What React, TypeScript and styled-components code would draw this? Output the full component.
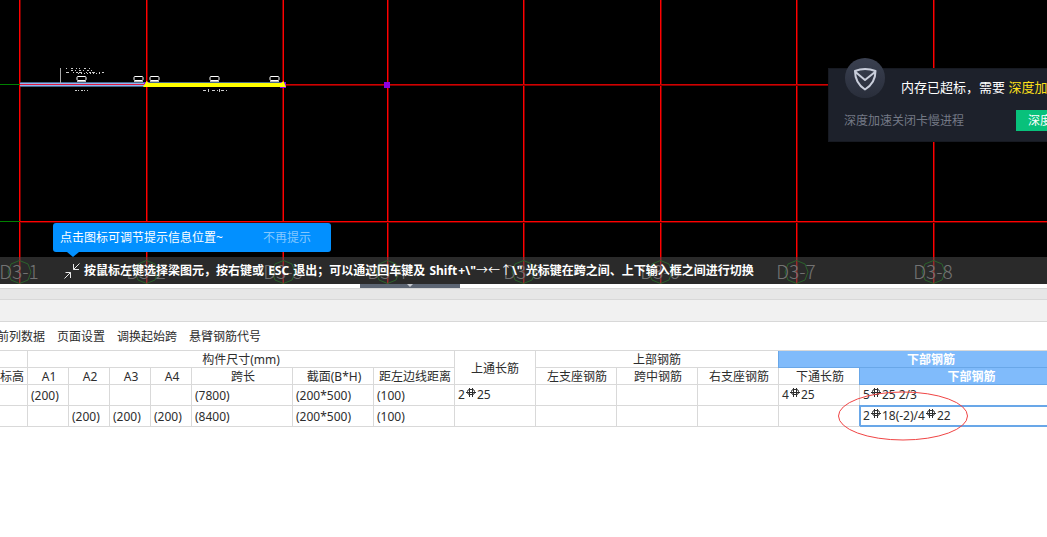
import React from "react";
import styled, { createGlobalStyle } from "styled-components";

const GlobalStyle = createGlobalStyle`
  * { box-sizing: border-box; }
  body {
    margin: 0;
    background: #fff;
    color: #2d2d2d;
    font: 12px/16px "Noto Sans", "Noto Sans CJK SC", sans-serif;
    overflow-x: hidden;
  }
`;

const Page = styled.main`
  display: flex;
  flex-direction: column;
  min-height: 100vh;
  overflow: hidden;
`;

const Viewport = styled.section`
  position: relative;
  display: flex;
  flex-direction: column;
  justify-content: flex-end;
  height: 284px;
  background: #000;
  overflow: hidden;
`;

const Drawing = styled.svg`
  position: absolute;
  inset: 0;
  width: 100%;
  height: 100%;
`;

const HintBar = styled.div`
  position: relative;
  display: flex;
  align-items: center;
  gap: 4px;
  height: 27px;
  padding-left: 64px;
  background: rgba(75, 75, 75, 0.56);
  color: #fff;
  font-weight: 700;
  white-space: nowrap;
`;

const Key = styled.kbd`
  margin: 0 1px;
  font: inherit;
`;

const Arrows = styled.span`
  font-weight: 400;
`;

const Bubble = styled.div`
  position: absolute;
  left: 53px;
  bottom: 32px;
  display: flex;
  align-items: center;
  justify-content: space-between;
  width: 278px;
  height: 29px;
  padding: 0 20px 0 7px;
  border-radius: 3px;
  background: #0290ff;
  color: #fff;
  white-space: nowrap;

  &::after {
    content: "";
    position: absolute;
    top: 100%;
    left: 14px;
    border: 6px solid transparent;
    border-top: 5px solid #0290ff;
    border-bottom: 0;
  }
`;

const BubbleButton = styled.button`
  padding: 0;
  border: 0;
  background: none;
  color: #84c8ff;
  font: inherit;
`;

const Alert = styled.aside`
  position: absolute;
  top: 68px;
  left: 828px;
  display: flex;
  flex-direction: column;
  gap: 14px;
  width: 300px;
  height: 74px;
  padding: 9px 0 0 15px;
  border: 1px solid #171a22;
  background: #1d212b;
  white-space: nowrap;
`;

const AlertTitle = styled.p`
  margin: 0 0 0 57px;
  color: #fff;
  font-size: 13px;
  line-height: 18px;
`;

const AlertMark = styled.span`
  color: #ffe01a;
`;

const AlertRow = styled.div`
  display: flex;
  align-items: center;
  justify-content: space-between;
  width: 244px;
  color: #747986;
`;

const AlertButton = styled.button`
  height: 21px;
  padding: 0 12px;
  border: 0;
  background: #08c17b;
  color: #fff;
  font: inherit;
`;

const Badge = styled.svg`
  position: absolute;
  top: -13px;
  left: 14px;
  width: 44px;
  height: 44px;
`;

const Splitter = styled.div`
  display: flex;
  height: 5px;
  padding-left: 360px;
  border-bottom: 1px solid #d5d5d5;
`;

const SplitterGrip = styled.button`
  display: flex;
  justify-content: center;
  width: 100px;
  height: 4px;
  padding: 0;
  border: 0;
  background: #5c6573;

  &::after {
    content: "";
    border: 3px solid transparent;
    border-top-color: #c5c9cf;
    border-bottom: 0;
  }
`;

const Strip = styled.div<{ $height: number; $color: string }>`
  height: ${(p) => p.$height}px;
  border-bottom: 1px solid #d8d8d8;
  background: ${(p) => p.$color};
`;

const Toolbar = styled.nav`
  display: flex;
  align-items: center;
  gap: 12px;
  height: 28px;
  margin-left: -3px;
  padding-top: 1px;
`;

const ToolButton = styled.button`
  padding: 0;
  border: 0;
  background: none;
  color: inherit;
  font: inherit;
  white-space: nowrap;
`;

const TableWrap = styled.div`
  overflow: hidden;
`;

const Table = styled.table`
  width: 100%;
  min-width: 1084px;
  table-layout: fixed;
  border-collapse: separate;
  border-spacing: 0;
  border-top: 1px solid #d9d9d9;
`;

const Head = styled.th<{ $active?: boolean; $sub?: boolean; $end?: boolean }>`
  position: ${(p) => (p.$active ? "relative" : "static")};
  padding: 2px ${(p) => (p.$end ? 4 : 0)}px 0 ${(p) => (p.$sub ? 2 : 0)}px;
  border: solid ${(p) => (p.$active ? "#69a7e8" : "#d9d9d9")};
  border-width: 0 1px 1px 0;
  background: ${(p) => (p.$active ? "#80bbfb" : "#fff")};
  box-shadow: ${(p) => (p.$active ? "-1px 0 0 #69a7e8" : "none")};
  color: ${(p) => (p.$active ? "#fff" : "inherit")};
  font-weight: ${(p) => (p.$active ? 700 : 400)};
  line-height: 14px;
  text-align: ${(p) => (p.$end ? "right" : "center")};
  white-space: nowrap;
`;

const Cell = styled.td<{ $selected?: boolean; $bar?: boolean }>`
  position: ${(p) => (p.$selected ? "relative" : "static")};
  height: 21px;
  padding: ${(p) => (p.$bar ? 0 : 2)}px 0 0 3px;
  border: solid ${(p) => (p.$selected ? "#69a7e8" : "#d9d9d9")};
  border-width: 0 1px 1px 0;
  box-shadow: ${(p) =>
    p.$selected
      ? "-1px -1px 0 #69a7e8, inset 1px 1px 0 #69a7e8, inset 0 -1px 0 #69a7e8"
      : "none"};
  line-height: 18px;
  white-space: nowrap;
`;

const BarGlyph = styled.svg`
  width: 10px;
  height: 10px;
  margin: 0 1px;
  vertical-align: 1px;
`;

const Annotation = styled.svg`
  position: absolute;
  left: 837px;
  top: 389px;
  width: 132px;
  height: 52px;
  pointer-events: none;
`;

const axes = [19, 146, 283, 387, 523, 660, 796, 933];
const tags = [81, 138, 154, 214, 274];
const columns = [28, 41, 41, 41, 41, 101, 81, 81, 81, 81, 81, 81, 81];
const subHeads = ["A1", "A2", "A3", "A4", "跨长", "截面(B*H)", "距左边线距离", "左支座钢筋", "跨中钢筋", "右支座钢筋", "下通长筋"];
const rows = [
  ["", "(200)", "", "", "", "(7800)", "(200*500)", "(100)", "2#25", "", "", "", "4#25", "5#25 2/3"],
  ["", "", "(200)", "(200)", "(200)", "(8400)", "(200*500)", "(100)", "", "", "", "", "", "2#18(-2)/4#22"],
];

/* Each "#" stands for the grade mark of a reinforcing bar. */
function BarText({ value }: { value: string }) {
  return (
    <>
      {value.split("#").map((part, i) => (
        <React.Fragment key={i}>
          {i > 0 && (
            <BarGlyph viewBox="0 0 10 10" fill="none" stroke="#2d2d2d" aria-label="HRB400">
              <rect x="1.5" y="1.5" width="7" height="5" rx="2" />
              <path d="M3.5 0V9M6.5 0V9M0 4.5H10" />
            </BarGlyph>
          )}
          {part}
        </React.Fragment>
      ))}
    </>
  );
}

function PlanDrawing() {
  return (
    <Drawing aria-hidden="true">
      {axes.map((x) => (
        <g key={x}>
          <path d={`M${x === 283 ? x - 0.5 : x + 1.5} 0V284`} stroke="#700" />
          <path d={`M${x + 0.5} 0V284`} stroke="#f00" />
        </g>
      ))}
      <path d="M0 84.5H20M0 221.5H20" stroke="#008000" />
      <path d="M20 222.5H4000" stroke="#600" />
      <path d="M20 221.5H4000" stroke="#f00" />
      <path d="M20 84.5H4000" stroke="#d00000" />
      <path d="M20 85.5H4000" stroke="#800000" />
      <rect x="20" y="82" width="264" height="5" fill="#45688c" />
      <rect x="20" y="83" width="126" height="3" fill="#94b4f0" />
      <rect x="20" y="84" width="126" height="1" fill="#e0183c" />
      <rect x="144" y="82" width="5" height="5" fill="#8000ff" />
      <rect x="280" y="82" width="6" height="6" fill="#8000ff" />
      <rect x="384" y="82" width="6" height="6" fill="#8c00e0" />
      <path d="M143 87L146.500 81L149 83H281L283.500 81L286 87H149Z" fill="#ff0" />
      <path d="M60.5 68V83" stroke="#aaa" />
      {tags.map((x) => (
        <g key={x}>
          <rect x={x - 4} y="76.5" width="9" height="4" rx="1" fill="#000" stroke="#fff" />
          <path d={`M${x - 4} 81.5H${x + 5}`} stroke="#bbb" />
        </g>
      ))}
      <g stroke="#ccc">
        <path d="M66 68.5H91" strokeDasharray="1 4 2 3 1 2" />
        <path d="M71 70.5H92" strokeDasharray="2 2 1 3" />
        <path d="M66 72.5H104" strokeDasharray="3 4 1 2 2 1" />
        <path d="M78 73.5H100" strokeDasharray="1 2" />
        <path d="M75 90.5H88" strokeDasharray="2 1 1 2" />
        <path d="M203 90.5H227" strokeDasharray="3 2 1 3" />
        <path d="M208.5 89V92M219.5 89V92" />
      </g>
      {axes.map((x, i) => (
        <g key={x}>
          <path
            d={`M${x + 0.5} 260.5L${x + 9} 264L${x + 12} 272L${x + 9} 280L${x + 0.5} 283.5L${x - 8} 280L${x - 11} 272L${x - 8} 264Z`}
            fill="none"
            stroke="#008000"
          />
          <text
            x={x}
            y="279"
            textAnchor="middle"
            fill="#a4a4a4"
            fontFamily="'Noto Sans CJK SC', sans-serif"
            fontWeight="300"
            fontSize="19"
          >
            {`D3-${i + 1}`}
          </text>
        </g>
      ))}
    </Drawing>
  );
}

export default function App() {
  return (
    <Page>
      <GlobalStyle />
      <Viewport>
        <PlanDrawing />
        <Bubble>
          <span>点击图标可调节提示信息位置~</span>
          <BubbleButton>不再提示</BubbleButton>
        </Bubble>
        <HintBar>
          <svg width="16" height="16" viewBox="0 0 16 16" fill="none" stroke="#e8e8e8">
            <path d="M15.5 0.5L9.5 6.5M9.5 1V6.5H15M0.5 15.5L6.5 9.5M1.5 9.5H6.5V15" />
          </svg>
          <span>
            按鼠标左键选择梁图元，按右键或 <Key>ESC</Key> 退出；可以通过回车键及 <Key>Shift</Key>+\"<Arrows>→←↑</Arrows>\" 光标键在跨之间、上下输入框之间进行切换
          </span>
        </HintBar>
        <Alert>
          <Badge viewBox="0 0 44 44" aria-hidden="true">
            <defs>
              <linearGradient id="badge" x1="0" y1="0" x2="0" y2="1">
                <stop offset="0" stopColor="#3a4050" />
                <stop offset="1" stopColor="#292e3b" />
              </linearGradient>
            </defs>
            <circle cx="22" cy="22" r="20" fill="url(#badge)" />
            <path
              d="M12 15Q22 11 32.5 15Q32.5 27 22 33.500Q12 27 12 15ZM12.5 16L22 24L32 16"
              fill="none"
              stroke="#c9cedb"
              strokeWidth="2"
              strokeLinejoin="round"
            />
          </Badge>
          <AlertTitle>
            内存已超标，需要 <AlertMark>深度加速</AlertMark>
          </AlertTitle>
          <AlertRow>
            <span>深度加速关闭卡慢进程</span>
            <AlertButton>深度加速</AlertButton>
          </AlertRow>
        </Alert>
      </Viewport>
      <Splitter>
        <SplitterGrip aria-label="折叠" />
      </Splitter>
      <Strip $height={11} $color="#e7e7e7" />
      <Strip $height={22} $color="#f1f1f1" />
      <Toolbar>
        <ToolButton>前列数据</ToolButton>
        <ToolButton>页面设置</ToolButton>
        <ToolButton>调换起始跨</ToolButton>
        <ToolButton>悬臂钢筋代号</ToolButton>
      </Toolbar>
      <TableWrap>
        <Table>
          <colgroup>
            {columns.map((w, i) => (
              <col key={i} width={w} />
            ))}
            <col />
          </colgroup>
          <thead>
            <tr>
              <Head />
              <Head colSpan={7}>构件尺寸(mm)</Head>
              <Head rowSpan={2}>上通长筋</Head>
              <Head colSpan={3}>上部钢筋</Head>
              <Head colSpan={2} $active>下部钢筋</Head>
            </tr>
            <tr>
              <Head $end>标高</Head>
              {subHeads.map((t) => (
                <Head key={t} $sub>{t}</Head>
              ))}
              <Head $active>下部钢筋</Head>
            </tr>
          </thead>
          <tbody>
            {rows.map((row, r) => (
              <tr key={r}>
                {row.map((value, c) => (
                  <Cell key={c} $selected={r === 1 && c === 13} $bar={value.includes("#")}>
                    <BarText value={value} />
                  </Cell>
                ))}
              </tr>
            ))}
          </tbody>
        </Table>
      </TableWrap>
      <Annotation viewBox="0 0 132 52" fill="none" stroke="#f04444" aria-hidden="true">
        <ellipse cx="66" cy="27" rx="64.5" ry="24" />
      </Annotation>
    </Page>
  );
}
